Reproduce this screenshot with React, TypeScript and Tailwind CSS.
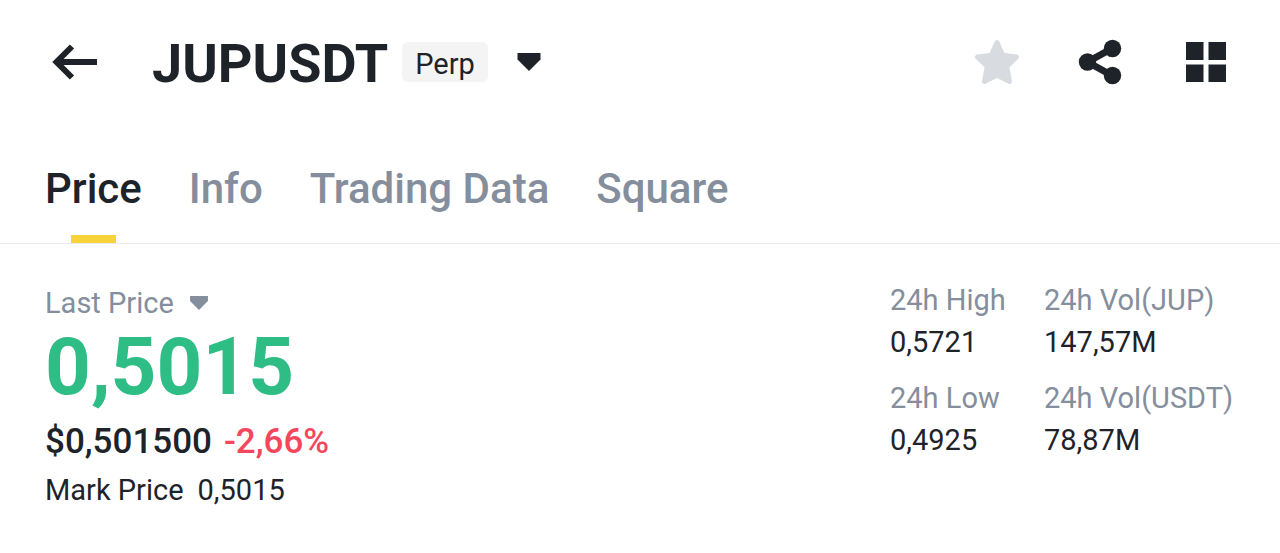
import clsx from "clsx";

const TABS = ["Price", "Info", "Trading Data", "Square"];

const STATS = [
  { label: "24h High", value: "0,5721" },
  { label: "24h Vol(JUP)", value: "147,57M" },
  { label: "24h Low", value: "0,4925" },
  { label: "24h Vol(USDT)", value: "78,87M" },
];

function CaretIcon({ className }: { className: string }) {
  return (
    <svg viewBox="0 0 24 18" fill="currentColor" className={className} aria-hidden="true">
      <path d="M0.500 0h23v6.500L12 18 0.500 6.500z" />
    </svg>
  );
}

function BackIcon() {
  return (
    <svg viewBox="0 0 46 36" className="h-9 w-[46px]" fill="none" stroke="currentColor" strokeWidth="6" aria-hidden="true">
      <path d="M45 18H6M20 2.500 4.500 18 20 33.500" />
    </svg>
  );
}

function StarIcon() {
  return (
    <svg viewBox="0 0 46 46" className="size-[46px]" fill="currentColor" stroke="currentColor" strokeWidth="5" strokeLinejoin="round" aria-hidden="true">
      <path d="M23 3.500 28.700 16.200 42.500 18 32.800 27.500 35.500 42.500 23 36 10.500 42.500 13.200 27.500 3.500 18 17.300 16.200z" />
    </svg>
  );
}

function ShareIcon() {
  return (
    <svg viewBox="0 0 44 46" className="h-[46px] w-11" fill="currentColor" aria-hidden="true">
      <path d="M34 9.500 9.500 23 34 36.500" fill="none" stroke="currentColor" strokeWidth="7" />
      <circle cx="9.500" cy="23" r="8.700" />
      <circle cx="34.500" cy="9.500" r="8.700" />
      <circle cx="34.500" cy="36.500" r="8.700" />
    </svg>
  );
}

function GridIcon() {
  return (
    <svg viewBox="0 0 40 40" className="size-10" fill="currentColor" aria-hidden="true">
      <path d="M0 0h17.500v18H0zM22.500 0H40v18H22.500zM0 22.500h17.500v17.500H0zM22.500 22.500H40v17.500H22.500z" />
    </svg>
  );
}

function Header() {
  return (
    <header className="flex h-[124px] items-center pr-[54px] pl-[52px]">
      <button type="button" aria-label="Back">
        <BackIcon />
      </button>
      <h1 className="ml-[54px] pt-1 text-[54px] leading-[60px] font-bold">JUPUSDT</h1>
      <span className="ml-3.5 rounded-md bg-[#f4f4f4] px-[13px] pt-1 text-[29px] leading-9">Perp</span>
      <button type="button" aria-label="Select pair" className="ml-[29px]">
        <CaretIcon className="h-[18px] w-6" />
      </button>
      <div className="ml-auto flex items-center">
        <button type="button" aria-label="Favorite" className="text-[#d8dce1]">
          <StarIcon />
        </button>
        <button type="button" aria-label="Share" className="ml-[58px]">
          <ShareIcon />
        </button>
        <button type="button" aria-label="More" className="ml-16">
          <GridIcon />
        </button>
      </div>
    </header>
  );
}

function Tabs() {
  return (
    <nav className="flex h-[120px] gap-[47px] border-b border-[#e9ebee] px-[45px] pt-[39px]">
      {TABS.map((tab, i) => (
        <a
          key={tab}
          href="#"
          aria-current={i === 0 ? "page" : undefined}
          className={clsx(
            "flex flex-col items-center justify-between text-[42px] leading-[52px] font-medium",
            i === 0 ? "text-[#1e2329]" : "text-[#848e9c]"
          )}
        >
          {tab}
          {i === 0 && <span className="h-2 w-[45px] bg-[#f8d33a]" />}
        </a>
      ))}
    </nav>
  );
}

export default function App() {
  return (
    <div className="min-h-screen bg-white font-['Roboto','Noto_Sans',sans-serif] text-[#1e2329]">
      <Header />
      <Tabs />
      <main className="flex justify-between pt-[35px] pr-[46px] pl-[45px]">
        <section className="pt-[7px]">
          <button type="button" className="flex items-center gap-[15px] text-[29px] leading-[34px] text-[#848e9c]">
            Last Price
            <CaretIcon className="h-3.5 w-5" />
          </button>
          <p className="text-[80px] leading-[94px] font-bold text-[#2ebd85]">0,5015</p>
          <p className="mt-1 flex gap-3 text-[35px] leading-[48px] font-medium">
            <span>$0,501500</span>
            <span className="text-[#f6465d]">-2,66%</span>
          </p>
          <p className="mt-1 flex gap-3.5 text-[29px] leading-10">
            <span>Mark Price</span>
            <span>0,5015</span>
          </p>
        </section>
        <dl className="grid grid-cols-[154px_190px] content-start gap-y-3.5 text-[29px] leading-[42px] whitespace-nowrap">
          {STATS.map((stat) => (
            <div key={stat.label}>
              <dt className="text-[#848e9c]">{stat.label}</dt>
              <dd>{stat.value}</dd>
            </div>
          ))}
        </dl>
      </main>
    </div>
  );
}
